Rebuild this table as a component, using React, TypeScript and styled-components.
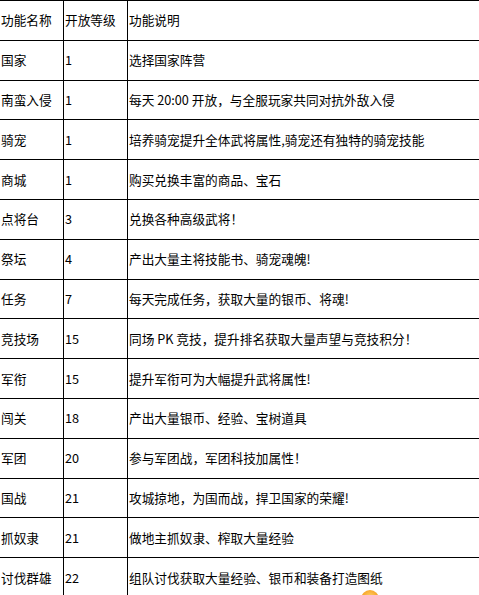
import React from "react";
import styled, { createGlobalStyle } from "styled-components";

const Global = createGlobalStyle`
  html, body {
    margin: 0;
    padding: 0;
    background: #fff;
    overflow: hidden;
  }
  body {
    font-family: "Noto Sans CJK SC", "Microsoft YaHei", sans-serif;
  }
`;

const Page = styled.div`
  position: relative;
  width: 479px;
  height: 595px;
  overflow: hidden;
`;

const Table = styled.table`
  border-collapse: collapse;
  margin-left: -1px;
  width: 560px;
  table-layout: fixed;
  font-size: 12.7px;
  color: #000;
`;

const Col = styled.col<{ $w?: number }>`
  ${(p) => (p.$w ? `width: ${p.$w}px;` : "")}
`;

const Row = styled.tr`
  height: 39.8px;
`;

const Cell = styled.td`
  border: 1px solid #000;
  padding: 0 0 0 1px;
  vertical-align: middle;
  white-space: nowrap;
  overflow: hidden;
  line-height: 18px;
`;

const Blob = styled.div`
  position: absolute;
  left: 361px;
  top: 590px;
  width: 18px;
  height: 18px;
  border-radius: 50%;
  background: radial-gradient(circle at 50% 40%, #ffd36a 0%, #f7a52a 55%, #f08a1c 100%);
`;

const rows: [string, string, string][] = [
  ["功能名称", "开放等级", "功能说明"],
  ["国家", "1", "选择国家阵营"],
  ["南蛮入侵", "1", "每天 20:00 开放，与全服玩家共同对抗外敌入侵"],
  ["骑宠", "1", "培养骑宠提升全体武将属性,骑宠还有独特的骑宠技能"],
  ["商城", "1", "购买兑换丰富的商品、宝石"],
  ["点将台", "3", "兑换各种高级武将！"],
  ["祭坛", "4", "产出大量主将技能书、骑宠魂魄!"],
  ["任务", "7", "每天完成任务，获取大量的银币、将魂!"],
  ["竞技场", "15", "同场 PK 竞技，提升排名获取大量声望与竞技积分！"],
  ["军衔", "15", "提升军衔可为大幅提升武将属性!"],
  ["闯关", "18", "产出大量银币、经验、宝树道具"],
  ["军团", "20", "参与军团战，军团科技加属性！"],
  ["国战", "21", "攻城掠地，为国而战，捍卫国家的荣耀!"],
  ["抓奴隶", "21", "做地主抓奴隶、榨取大量经验"],
  ["讨伐群雄", "22", "组队讨伐获取大量经验、银币和装备打造图纸"],
];

export default function App() {
  return (
    <Page>
      <Global />
      <Table>
        <colgroup>
          <Col $w={64} />
          <Col $w={64} />
          <Col />
        </colgroup>
        <tbody>
          {rows.map((r, i) => (
            <Row key={i}>
              <Cell>{r[0]}</Cell>
              <Cell>{r[1]}</Cell>
              <Cell>{r[2]}</Cell>
            </Row>
          ))}
        </tbody>
      </Table>
      <Blob />
    </Page>
  );
}
